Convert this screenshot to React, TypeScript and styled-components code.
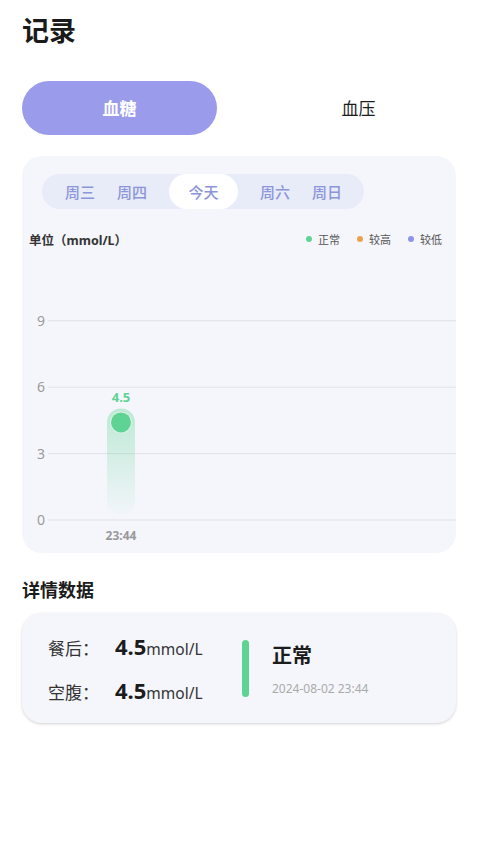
import React from 'react'
import styled, { createGlobalStyle } from 'styled-components'

const GlobalStyle = createGlobalStyle`
	html, body { margin: 0; padding: 0; background: #fff; }
	body { font-family: "Noto Sans", "Noto Sans CJK SC", sans-serif; color: #1c1c1c; }
`;

const GREEN = '#5fd394';

const Page = styled.div`
	width: 478px;
	min-height: 850px;
	box-sizing: border-box;
	padding: 10px 22px 0;
`;
const Title = styled.h1`
	margin: 0;
	height: 42px;
	line-height: 42px;
	font-size: 27px;
	font-weight: 700;
	color: #1a1a1a;
`;
const TypeTabs = styled.div`
	display: flex;
	justify-content: space-between;
	margin-top: 29px;
`;
const TypeTab = styled.div<{ active?: boolean }>`
	width: 195px;
	height: 54px;
	border-radius: 27px;
	display: flex;
	align-items: center;
	justify-content: center;
	padding-bottom: 2px;
	box-sizing: border-box;
	font-size: 17px;
	font-weight: ${({ active }) => active ? 700 : 400};
	color: ${({ active }) => active ? '#fff' : '#1c1c1c'};
	background: ${({ active }) => active ? '#9b9bec' : 'transparent'};
`;
const ChartCard = styled.div`
	margin-top: 21px;
	height: 397px;
	border-radius: 20px;
	background: #f5f6fc;
	overflow: hidden;
	padding-top: 18px;
	box-sizing: border-box;
	display: flex;
	flex-direction: column;
`;
const DayBar = styled.div`
	align-self: flex-start;
	margin-left: 20px;
	height: 35px;
	border-radius: 18px;
	background: #e8ebf8;
	display: flex;
	align-items: center;
	padding: 0 11px 0 12px;
`;
const Day = styled.div<{ active?: boolean }>`
	width: ${({ active }) => active ? '69px' : '52px'};
	margin: ${({ active }) => active ? '0 11px' : '0'};
	height: 35px;
	border-radius: 18px;
	display: flex;
	align-items: center;
	justify-content: center;
	font-size: 15px;
	font-weight: 500;
	color: #8b96d8;
	background: ${({ active }) => active ? '#fff' : 'transparent'};
`;
const UnitRow = styled.div`
	display: flex;
	align-items: center;
	justify-content: space-between;
	margin-top: 22px;
	padding: 0 14px 0 7px;
	height: 16px;
`;
const Unit = styled.span`
	font-size: 12.5px;
	font-weight: 700;
	color: #333;
`;
const Legend = styled.div`
	display: flex;
	align-items: center;
	gap: 17px;
`;
const LegendItem = styled.span`
	display: flex;
	align-items: center;
	gap: 6px;
	font-size: 11px;
	color: #555;
`;
const Dot = styled.i<{ color: string }>`
	width: 6px;
	height: 6px;
	border-radius: 50%;
	background: ${({ color }) => color};
`;
const Chart = styled.svg`
	display: block;
	margin-top: 9px;
	width: 434px;
	height: 297px;
	flex-shrink: 0;
	font-family: "Noto Sans", sans-serif;
`;
const SectionTitle = styled.h2`
	margin: 24px 0 0;
	height: 26px;
	line-height: 26px;
	font-size: 18px;
	font-weight: 700;
	color: #1c1c1c;
`;
const DetailCard = styled.div`
	margin-top: 10px;
	height: 110px;
	border-radius: 20px;
	background: #f5f6fc;
	box-shadow: 0 1px 3px rgba(0, 0, 0, 0.18);
	display: flex;
	align-items: center;
	padding-left: 26px;
	box-sizing: border-box;
`;
const Readings = styled.div`
	display: flex;
	flex-direction: column;
	gap: 14px;
	width: 194px;
`;
const Reading = styled.div`
	display: flex;
	align-items: baseline;
	height: 30px;
`;
const ReadingLabel = styled.span`
	width: 67px;
	font-size: 17px;
	color: #333;
`;
const ReadingValue = styled.span`
	font-size: 22px;
	font-weight: 700;
	color: #1c1c1c;
`;
const ReadingUnit = styled.span`
	font-size: 15.5px;
	color: #333;
`;
const StatusBar = styled.div`
	width: 7px;
	height: 57px;
	border-radius: 4px;
	background: ${GREEN};
`;
const Status = styled.div`
	margin-left: 23px;
	display: flex;
	flex-direction: column;
	gap: 11px;
`;
const StatusText = styled.span`
	font-size: 20px;
	font-weight: 700;
	color: #1c1c1c;
`;
const StatusTime = styled.span`
	font-size: 12px;
	color: #aaa;
`;

const days = [
	{ label: '周三' },
	{ label: '周四' },
	{ label: '今天', active: true },
	{ label: '周六' },
	{ label: '周日' },
];

const ticks = [9, 6, 3, 0];
const zeroY = 264;
const step = 66.4 / 3;
const yOf = (v: number) => zeroY - v * step;

const App = () => {
	const value = 4.5;
	const cy = yOf(value) + 2;
	return (
		<Page>
			<GlobalStyle />
			<Title>记录</Title>
			<TypeTabs>
				<TypeTab active>血糖</TypeTab>
				<TypeTab>血压</TypeTab>
			</TypeTabs>
			<ChartCard>
				<DayBar>
					{days.map(d => <Day key={d.label} active={d.active}>{d.label}</Day>)}
				</DayBar>
				<UnitRow>
					<Unit>单位（mmol/L）</Unit>
					<Legend>
						<LegendItem><Dot color="#5fd394" />正常</LegendItem>
						<LegendItem><Dot color="#f0a04b" />较高</LegendItem>
						<LegendItem><Dot color="#8f95e6" />较低</LegendItem>
					</Legend>
				</UnitRow>
				<Chart viewBox="0 0 434 297">
					<defs>
						<linearGradient id="barFill" x1="0" y1="0" x2="0" y2="1">
							<stop offset="0" stopColor={GREEN} stopOpacity="0.38" />
							<stop offset="1" stopColor={GREEN} stopOpacity="0.02" />
						</linearGradient>
					</defs>
					{ticks.map(t => (
						<g key={t}>
							<line x1="26" x2="434" y1={yOf(t)} y2={yOf(t)} stroke="#dfe1ea" strokeWidth="1" />
							<text x="19" y={yOf(t) + 5} textAnchor="middle" fontSize="14" fill="#9a9a9a">{t}</text>
						</g>
					))}
					<rect x="85" y={cy - 14} width="28" height={zeroY - 5 - (cy - 14)} rx="14" fill="url(#barFill)" />
					<circle cx="99" cy={cy} r="11" fill="#d6f3e3" />
					<circle cx="99" cy={cy} r="10" fill={GREEN} />
					<text x="99" y={cy - 20} textAnchor="middle" fontSize="13" fontWeight="700" fill={GREEN}>{value}</text>
					<text x="99" y="284" textAnchor="middle" fontSize="12" fontWeight="700" fill="#999">23:44</text>
				</Chart>
			</ChartCard>
			<SectionTitle>详情数据</SectionTitle>
			<DetailCard>
				<Readings>
					<Reading>
						<ReadingLabel>餐后：</ReadingLabel>
						<ReadingValue>4.5</ReadingValue>
						<ReadingUnit>mmol/L</ReadingUnit>
					</Reading>
					<Reading>
						<ReadingLabel>空腹：</ReadingLabel>
						<ReadingValue>4.5</ReadingValue>
						<ReadingUnit>mmol/L</ReadingUnit>
					</Reading>
				</Readings>
				<StatusBar />
				<Status>
					<StatusText>正常</StatusText>
					<StatusTime>2024-08-02 23:44</StatusTime>
				</Status>
			</DetailCard>
		</Page>
	);
};

export default App;
